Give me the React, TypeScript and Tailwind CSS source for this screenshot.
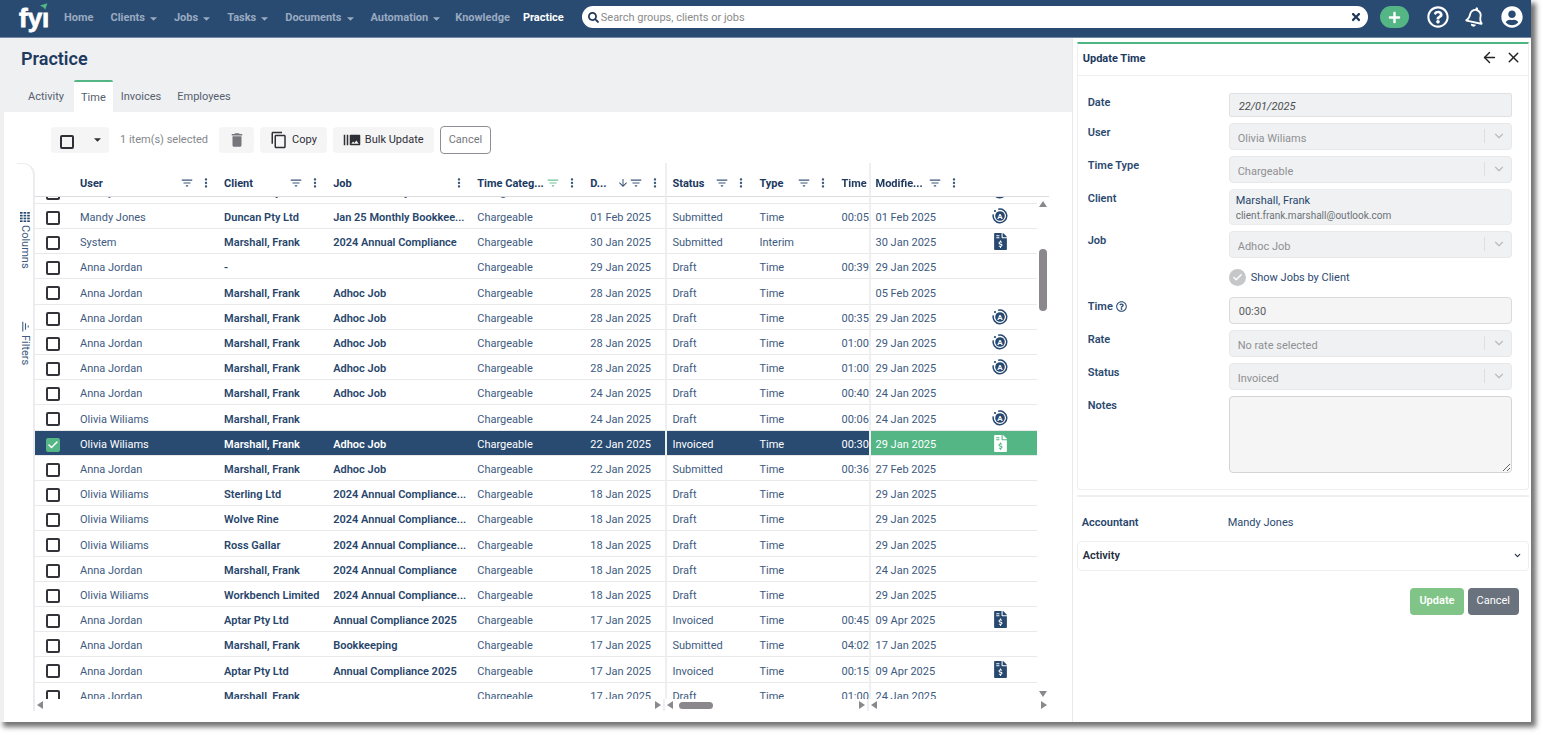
import { useLayoutEffect, useRef } from 'react';
import type { ReactNode } from 'react';
import { FaFileInvoiceDollar, FaPlus, FaRegBell, FaRegQuestionCircle, FaSearch, FaTimes, FaUserCircle } from 'react-icons/fa';
import { MdArrowDownward, MdBurstMode, MdContentCopy, MdDelete, MdFilterList, MdMoreVert } from 'react-icons/md';
import { ArrowLeft, Check, ChevronDown, X } from 'lucide-react';

type RowIcon = 'auto' | 'invoice' | '';

interface TimeRow {
  user: string;
  client: string;
  job: string;
  date: string;
  status: string;
  type: string;
  time: string;
  modified: string;
  icon: RowIcon;
  selected?: boolean;
}

const row = (user: string, client: string, job: string, date: string, status: string, type: string, time: string, modified: string, icon: RowIcon = '', selected = false): TimeRow => ({
  user, client, job, date, status, type, time, modified, icon, selected
});

const rows: TimeRow[] = [
  row('Mandy Jones', 'Duncan Pty Ltd', 'Jan 25 Monthly Bookkee...', '01 Feb 2025', 'Draft', 'Time', '00:05', '01 Feb 2025', 'auto'),
  row('Mandy Jones', 'Duncan Pty Ltd', 'Jan 25 Monthly Bookkee...', '01 Feb 2025', 'Submitted', 'Time', '00:05', '01 Feb 2025', 'auto'),
  row('System', 'Marshall, Frank', '2024 Annual Compliance', '30 Jan 2025', 'Submitted', 'Interim', '', '30 Jan 2025', 'invoice'),
  row('Anna Jordan', '-', '', '29 Jan 2025', 'Draft', 'Time', '00:39', '29 Jan 2025'),
  row('Anna Jordan', 'Marshall, Frank', 'Adhoc Job', '28 Jan 2025', 'Draft', 'Time', '', '05 Feb 2025'),
  row('Anna Jordan', 'Marshall, Frank', 'Adhoc Job', '28 Jan 2025', 'Draft', 'Time', '00:35', '29 Jan 2025', 'auto'),
  row('Anna Jordan', 'Marshall, Frank', 'Adhoc Job', '28 Jan 2025', 'Draft', 'Time', '01:00', '29 Jan 2025', 'auto'),
  row('Anna Jordan', 'Marshall, Frank', 'Adhoc Job', '28 Jan 2025', 'Draft', 'Time', '01:00', '29 Jan 2025', 'auto'),
  row('Anna Jordan', 'Marshall, Frank', 'Adhoc Job', '24 Jan 2025', 'Draft', 'Time', '00:40', '24 Jan 2025'),
  row('Olivia Wiliams', 'Marshall, Frank', '', '24 Jan 2025', 'Draft', 'Time', '00:06', '24 Jan 2025', 'auto'),
  row('Olivia Wiliams', 'Marshall, Frank', 'Adhoc Job', '22 Jan 2025', 'Invoiced', 'Time', '00:30', '29 Jan 2025', 'invoice', true),
  row('Anna Jordan', 'Marshall, Frank', 'Adhoc Job', '22 Jan 2025', 'Submitted', 'Time', '00:36', '27 Feb 2025'),
  row('Olivia Wiliams', 'Sterling Ltd', '2024 Annual Compliance...', '18 Jan 2025', 'Draft', 'Time', '', '29 Jan 2025'),
  row('Olivia Wiliams', 'Wolve Rine', '2024 Annual Compliance...', '18 Jan 2025', 'Draft', 'Time', '', '29 Jan 2025'),
  row('Olivia Wiliams', 'Ross Gallar', '2024 Annual Compliance...', '18 Jan 2025', 'Draft', 'Time', '', '29 Jan 2025'),
  row('Anna Jordan', 'Marshall, Frank', '2024 Annual Compliance', '18 Jan 2025', 'Draft', 'Time', '', '24 Jan 2025'),
  row('Olivia Wiliams', 'Workbench Limited', '2024 Annual Compliance...', '18 Jan 2025', 'Draft', 'Time', '', '29 Jan 2025'),
  row('Anna Jordan', 'Aptar Pty Ltd', 'Annual Compliance 2025', '17 Jan 2025', 'Invoiced', 'Time', '00:45', '09 Apr 2025', 'invoice'),
  row('Anna Jordan', 'Marshall, Frank', 'Bookkeeping', '17 Jan 2025', 'Submitted', 'Time', '04:02', '17 Jan 2025'),
  row('Anna Jordan', 'Aptar Pty Ltd', 'Annual Compliance 2025', '17 Jan 2025', 'Invoiced', 'Time', '00:15', '09 Apr 2025', 'invoice'),
  row('Anna Jordan', 'Marshall, Frank', '', '17 Jan 2025', 'Draft', 'Time', '01:00', '24 Jan 2025')
];

const navItems = [
  { label: 'Home', menu: false },
  { label: 'Clients', menu: true },
  { label: 'Jobs', menu: true },
  { label: 'Tasks', menu: true },
  { label: 'Documents', menu: true },
  { label: 'Automation', menu: true }
];

function Caret() {
  return (
    <svg viewBox="0 0 8 4" className="w-[7px] h-1 fill-current">
      <path d="M0 0h8L4 4z" />
    </svg>
  );
}

function Logo() {
  return (
    <svg viewBox="0 0 30 34" className="w-[30px] h-[34px] overflow-visible" role="img" aria-label="fyi">
      <text x="1" y="25" fontSize="26" fontWeight="700" fill="#fff" stroke="#fff" strokeWidth="0.8" fontFamily="'Liberation Sans Narrow', 'Liberation Sans', sans-serif">fyı</text>
      <path d="M22 3.4 29.4 1.2 27.2 7.8 25.6 5.6z" fill="#52b788" />
    </svg>
  );
}

function AutoIcon() {
  return (
    <svg viewBox="0 0 16 16" className="w-4 h-4">
      <path d="M6.2 1.3A6.8 6.8 0 1 1 1.3 6.4" fill="none" stroke="#27486f" strokeWidth="1.5" />
      <circle cx="3" cy="3" r="1.1" fill="#27486f" />
      <circle cx="8" cy="8" r="4.8" fill="#27486f" />
      <text x="8" y="10.8" fontSize="8" fontWeight="600" fill="#fff" textAnchor="middle">A</text>
    </svg>
  );
}

function TopBar() {
  return (
    <header className="flex items-center h-[38px] shrink-0 bg-[#294b72] border-b border-[#7389a3] text-[11px] font-bold text-[#9aaac0] pl-[18px] pr-2">
      <a href="#home" className="mr-4"><Logo /></a>
      <nav className="flex items-center gap-[17px]">
        {navItems.map((item) =>
          item.menu ? (
            <button key={item.label} className="flex items-center gap-[5px] cursor-pointer">
              {item.label}
              <Caret />
            </button>
          ) : (
            <a key={item.label} href="#home">{item.label}</a>
          )
        )}
      </nav>
      <nav className="flex items-center gap-[13px] ml-[15px] mr-[18px]">
        <a href="#knowledge">Knowledge</a>
        <a href="#practice" className="text-white">Practice</a>
      </nav>
      <div className="flex items-center flex-1 h-[22px] mb-[3px] rounded-full bg-white px-1.5 gap-[2px] text-[#20395a]">
        <FaSearch size={11} />
        <input type="text" aria-label="Search" placeholder="Search groups, clients or jobs" className="flex-1 min-w-0 pt-[2px] text-[11px] font-normal outline-none placeholder:text-[#8a8a8a]" />
        <button aria-label="Clear search"><FaTimes size={12} /></button>
      </div>
      <div className="flex items-center gap-4 ml-3 mb-[3px] text-white">
        <button aria-label="Add" className="flex items-center justify-center w-[29px] h-[22px] rounded-full bg-[#54b685] mr-[2px]"><FaPlus size={13} /></button>
        <button aria-label="Help"><FaRegQuestionCircle size={22} /></button>
        <button aria-label="Notifications" className="rotate-12"><FaRegBell size={20} /></button>
        <button aria-label="Account"><FaUserCircle size={22} /></button>
      </div>
    </header>
  );
}

function Toolbar() {
  return (
    <div className="flex items-center gap-1.5 h-[26px] mt-[15px] ml-[47px] text-[11px] text-[#2f2f36]">
      <div className="flex items-center justify-between h-full w-[58px] rounded bg-[#f5f5f6] pl-[9px] pr-2">
        <input type="checkbox" aria-label="Select all" className="appearance-none w-[14px] h-[14px] mt-1 border-2 border-[#2f2f36] rounded-xs" />
        <button aria-label="Selection options"><Caret /></button>
      </div>
      <span className="px-[5px] text-[#85878c]">1 item(s) selected</span>
      <button aria-label="Delete" className="flex items-center justify-center h-full w-[35px] rounded bg-[#f5f5f6] text-[#76767c]"><MdDelete size={18} /></button>
      <button className="flex items-center gap-1 h-full rounded bg-[#f5f5f6] px-2.5"><MdContentCopy size={18} />Copy</button>
      <button className="flex items-center gap-1 h-full rounded bg-[#f5f5f6] px-2.5"><MdBurstMode size={18} />Bulk Update</button>
      <button className="h-[28px] rounded border border-[#8e8f94] bg-white px-2 text-[#76777b]">Cancel</button>
    </div>
  );
}

function HeadCell({ label, filter = true, active = false, sorted = false, edge = false }: { label: string; filter?: boolean; active?: boolean; sorted?: boolean; edge?: boolean }) {
  return (
    <th className={`p-0 font-bold ${edge ? 'border-l-2 border-[#efeff1] pl-[5px]' : 'pl-2'}`}>
      <div className="flex items-center pt-[7px] pr-[3px]">
        <span className="pt-[2px] whitespace-nowrap">{label}</span>
        <span className="flex items-center ml-auto shrink-0 text-[#3a5679]">
          {sorted && <MdArrowDownward size={12} />}
          {filter && <MdFilterList size={14} className={active ? 'text-[#6cc196]' : ''} />}
          <MdMoreVert size={14} className="ml-[5px]" />
        </span>
      </div>
    </th>
  );
}

function RowCheckbox({ label, checked }: { label: string; checked?: boolean }) {
  return (
    <span className="relative block w-[14px] h-[14px] ml-[11px]">
      <input
        type="checkbox"
        aria-label={label}
        defaultChecked={checked}
        className="peer block appearance-none w-[14px] h-[14px] rounded-xs border-2 border-[#33333a] checked:bg-[#54b685] checked:border-[#54b685]"
      />
      <Check size={12} strokeWidth={3} className="absolute left-px top-px text-white hidden peer-checked:block pointer-events-none" />
    </span>
  );
}

function Arrow({ dir }: { dir: 'left' | 'right' | 'up' | 'down' }) {
  const points = { left: '8,1 8,9 2,5', right: '2,1 2,9 8,5', up: '1,8 9,8 5,2', down: '1,2 9,2 5,8' };
  return (
    <svg viewBox="0 0 10 10" className="w-2.5 h-2.5 shrink-0">
      <polygon points={points[dir]} fill="#8a888c" />
    </svg>
  );
}

function SideTabs() {
  return (
    <div className="w-[31px] pl-[13px] shrink-0 text-[11px] text-[#3d5a80]">
      <div className="flex flex-col items-center h-full border-t border-r-2 border-[#ececee] rounded-tr-xl pt-12">
        <button className="flex flex-col items-center gap-[3px]">
          <svg viewBox="0 0 10 10" className="w-2.5 h-2.5 fill-[#27486f]">
            {[0, 3.6, 7.2].map((x) => [0, 2.8, 5.6, 8.4].map((y) => <rect key={`${x}-${y}`} x={x} y={y} width="2.6" height="1.7" />))}
          </svg>
          <span className="[writing-mode:vertical-rl]">Columns</span>
        </button>
        <button className="flex flex-col items-center gap-[2px] mt-[51px]">
          <MdFilterList size={13} className="-rotate-90" />
          <span className="[writing-mode:vertical-rl]">Filters</span>
        </button>
      </div>
    </div>
  );
}

function TimeGrid() {
  const body = useRef<HTMLDivElement>(null);

  useLayoutEffect(() => {
    if (body.current) body.current.scrollTop = 18;
  }, []);

  return (
    <div className="flex flex-1 min-h-0 mt-2.5 pb-[11px]">
      <SideTabs />
      <div className="flex flex-col flex-1 min-w-0 pr-[23px]">
        <div className="flex flex-1 min-h-0">
          <div ref={body} className="flex-1 min-w-0 overflow-hidden">
            <table className="w-full table-fixed border-separate border-spacing-0 text-left text-[11px] text-[#3d5a80]">
              <colgroup>
                <col className="w-[37px]" />
                <col className="w-[144px]" />
                <col className="w-[109px]" />
                <col className="w-[144px]" />
                <col className="w-[113px]" />
                <col className="w-[83px]" />
                <col className="w-[86px]" />
                <col className="w-[82px]" />
                <col className="w-[35px]" />
                <col className="w-[95px]" />
                <col className="w-[73px]" />
              </colgroup>
              <thead className="sticky top-0 z-10 bg-white text-[#20395f]">
                <tr className="h-[34px] *:border-b *:border-b-[#dcdcdf]">
                  <th />
                  <HeadCell label="User" />
                  <HeadCell label="Client" />
                  <HeadCell label="Job" filter={false} />
                  <HeadCell label="Time Categ..." active />
                  <HeadCell label="D..." sorted />
                  <HeadCell label="Status" edge />
                  <HeadCell label="Type" />
                  <th className="p-0 pl-2 pt-[9px] font-bold">Time</th>
                  <HeadCell label="Modifie..." edge />
                  <th />
                </tr>
              </thead>
              <tbody>
                {rows.map((r, i) => (
                  <tr
                    key={i}
                    className={`h-[25px] nth-[5n]:h-[26px] *:p-0 *:pl-2 *:pt-1 *:leading-4 *:border-b *:border-b-[#e9e9eb] *:whitespace-nowrap *:overflow-hidden *:text-ellipsis ${r.selected ? 'bg-[#294b72] text-white' : ''}`}
                  >
                    <td className="!pl-0 !pt-[3px]"><RowCheckbox label={`Select row ${i + 1}`} checked={r.selected} /></td>
                    <td>{r.user}</td>
                    <td className={`font-semibold ${r.selected ? '' : 'text-[#27456b]'}`}>{r.client}</td>
                    <td className={`font-semibold ${r.selected ? '' : 'text-[#27456b]'}`}>{r.job}</td>
                    <td>Chargeable</td>
                    <td>{r.date}</td>
                    <td className="border-l-2 border-l-[#efeff1] !pl-[5px]">{r.status}</td>
                    <td>{r.type}</td>
                    <td className="!text-clip">{r.time}</td>
                    <td className={`border-l-2 border-l-[#efeff1] !pl-[5px] ${r.selected ? 'bg-[#54b685]' : ''}`}>{r.modified}</td>
                    <td className={`!pt-0 !pl-0 ${r.selected ? 'bg-[#54b685]' : 'text-[#27486f]'}`}>
                      <span className="flex justify-center">
                        {r.icon === 'auto' && <AutoIcon />}
                        {r.icon === 'invoice' && <FaFileInvoiceDollar size={17} />}
                      </span>
                    </td>
                  </tr>
                ))}
              </tbody>
            </table>
          </div>
          {/* vertical scrollbar */}
          <div className="flex flex-col items-center w-3 mt-[33px] pt-[2px] border-t border-[#dcdcdf]">
            <Arrow dir="up" />
            <div className="w-2 h-[62px] mt-10 rounded-full bg-[#8a888c]" />
            <div className="mt-auto"><Arrow dir="down" /></div>
          </div>
        </div>
        {/* one horizontal scrollbar per pinned section */}
        <div className="flex items-center h-3">
          <div className="flex justify-between flex-[630]"><Arrow dir="left" /><Arrow dir="right" /></div>
          <div className="flex items-center flex-[203] h-full border-l-2 border-[#efeff1]">
            <Arrow dir="left" />
            <div className="w-[34px] h-[7px] ml-1 rounded-full bg-[#8a888c]" />
            <div className="ml-auto"><Arrow dir="right" /></div>
          </div>
          <div className="flex items-center justify-between flex-[180] h-full border-l-2 border-[#efeff1]"><Arrow dir="left" /><Arrow dir="right" /></div>
        </div>
      </div>
    </div>
  );
}

function Field({ label, id, help, children }: { label?: string; id?: string; help?: boolean; children: ReactNode }) {
  return (
    <div className="flex">
      <div className="w-[141px] shrink-0 flex items-start gap-[3px] pt-[2px] font-semibold text-[#2b4a70]">
        {label && <label htmlFor={id} className="leading-4">{label}</label>}
        {help && <FaRegQuestionCircle size={11} className="mt-[2px]" />}
      </div>
      <div className="flex-1 min-w-0">{children}</div>
    </div>
  );
}

function SelectField({ label, id, value }: { label: string; id: string; value: string }) {
  return (
    <Field label={label} id={id}>
      <div className="relative">
        <select id={id} disabled className="block appearance-none w-full h-[27px] rounded border border-[#e6e8ea] bg-[#eff1f3] pl-2 pt-[5px] text-[#8f9092] opacity-100">
          <option>{value}</option>
        </select>
        <span className="absolute right-1.5 top-1.5 flex items-center gap-[7px] h-3.5 pointer-events-none text-[#b9babd]">
          <span className="w-px h-full bg-[#dcdee0]" />
          <ChevronDown size={14} />
        </span>
      </div>
    </Field>
  );
}

function UpdatePanel() {
  return (
    <aside className="w-[30%] shrink-0 border-l border-[#e9e9ec] bg-white pt-1 pl-1 pr-[2px] text-[11px] text-[#2b4a70]">
      <section className="border border-[#efeff1] border-t-2 border-t-[#4cb782] rounded-b">
        <div className="flex items-center justify-between h-8 pl-[5px] pr-1.5 pb-1 border-b border-[#efeff1]">
          <h2 className="pt-[3px] font-bold text-[#20395f]">Update Time</h2>
          <div className="flex items-center gap-[7px] text-[#222]">
            <button aria-label="Back"><ArrowLeft size={17} /></button>
            <button aria-label="Close"><X size={17} /></button>
          </div>
        </div>
        <form className="flex flex-col gap-1.5 pt-[17px] pb-4 pl-2.5 pr-4">
          <Field label="Date" id="date">
            <input id="date" type="text" defaultValue="22/01/2025" readOnly className="block w-full h-6 border border-[#dfe1e4] rounded-xs bg-[#eff1f3] px-[9px] pt-[2px] italic text-[#4b4d50]" />
          </Field>
          <SelectField label="User" id="user" value="Olivia Wiliams" />
          <SelectField label="Time Type" id="time-type" value="Chargeable" />
          <Field label="Client">
            <div className="h-9 rounded border border-[#eaecee] bg-[#eff1f3] px-1.5 pt-[3px] leading-[15px]">
              <div className="text-[#27456b]">Marshall, Frank</div>
              <div className="text-[10px] text-[#6d7176]">client.frank.marshall@outlook.com</div>
            </div>
          </Field>
          <SelectField label="Job" id="job" value="Adhoc Job" />
          <Field>
            <label className="flex items-center gap-[5px] h-[27px]">
              <span className="relative w-[17px] h-[17px]">
                <input type="checkbox" defaultChecked disabled className="block appearance-none w-[17px] h-[17px] rounded-full bg-[#c6c7c8]" />
                <Check size={11} strokeWidth={3} className="absolute left-[3px] top-[3px] text-white" />
              </span>
              <span className="pt-[2px]">Show Jobs by Client</span>
            </label>
          </Field>
          <Field label="Time" id="time" help>
            <input id="time" type="text" defaultValue="00:30" className="block w-full h-[27px] border border-[#d9dadc] rounded-sm bg-[#f5f5f5] px-[9px] pt-[2px] text-[#5a5c60]" />
          </Field>
          <SelectField label="Rate" id="rate" value="No rate selected" />
          <SelectField label="Status" id="status" value="Invoiced" />
          <Field label="Notes" id="notes">
            <textarea id="notes" className="block w-full h-[77px] border border-[#d3d4d6] rounded-sm bg-[#f5f5f5] px-[9px]" />
          </Field>
        </form>
      </section>
      <div className="border-t-2 border-[#efeff1] mt-[5px] pt-[18px] pl-[5px] flex items-center">
        <span className="w-[146px] font-semibold text-[#27456b]">Accountant</span>
        <span>Mandy Jones</span>
      </div>
      <button className="flex items-center justify-between w-full h-[30px] mt-[9px] border border-[#efeff1] rounded-sm pl-[5px] pr-1.5 font-semibold text-[#222d3d]">
        <span className="pt-[2px]">Activity</span>
        <ChevronDown size={9} strokeWidth={3} />
      </button>
      <div className="flex justify-end gap-1 mt-[17px] pr-2.5 text-white">
        <button className="h-[27px] rounded-sm bg-[#80c587] px-[9px] font-semibold">Update</button>
        <button className="h-[27px] rounded-sm bg-[#69727d] px-[9px]">Cancel</button>
      </div>
    </aside>
  );
}

export default function App() {
  return (
    <div className="h-screen bg-white pr-3 pb-[13px] font-[Roboto,'Open_Sans',sans-serif]">
      <div className="flex flex-col h-full bg-white shadow-[4px_4px_5px_1px_rgba(0,0,0,0.55)]">
        <TopBar />
        <div className="flex flex-1 min-h-0">
          <main className="flex flex-col flex-1 min-w-0 bg-[#eff0f2]">
            <h1 className="pl-[21px] pt-2 text-lg leading-[26px] font-semibold text-[#20395f]">Practice</h1>
            <div className="flex items-end h-8 mt-2 pl-[18px] text-[11px] text-[#55606e]">
              <button className="h-8 px-2.5 pt-[2px]">Activity</button>
              <button className="h-8 px-[7px] pt-[2px] bg-white border-t-2 border-[#54b685] rounded-t-xs">Time</button>
              <button className="h-8 px-2 pt-[2px]">Invoices</button>
              <button className="h-8 px-2 pt-[2px]">Employees</button>
            </div>
            <div className="flex flex-col flex-1 min-h-0 ml-1 bg-white">
              <Toolbar />
              <TimeGrid />
            </div>
          </main>
          <UpdatePanel />
        </div>
      </div>
    </div>
  );
}
